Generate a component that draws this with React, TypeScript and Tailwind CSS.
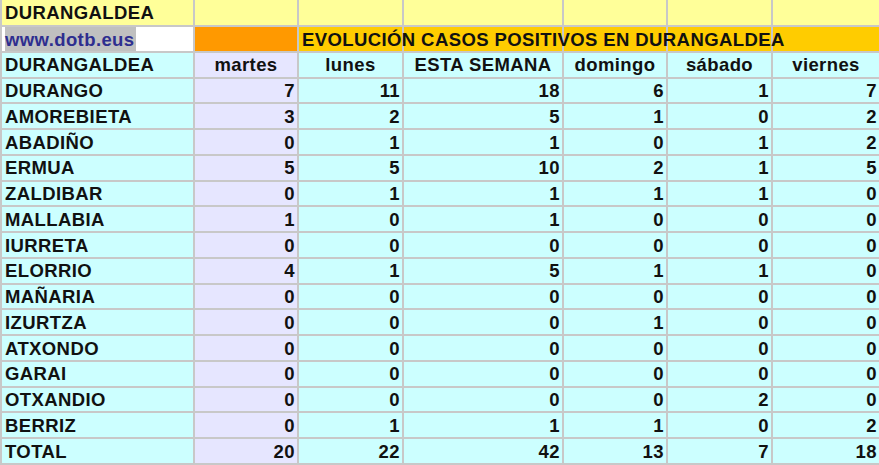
import React from "react";

const days = ["martes", "lunes", "ESTA SEMANA", "domingo", "sábado", "viernes"];

const rows: [string, number[]][] = [
  ["DURANGO", [7, 11, 18, 6, 1, 7]],
  ["AMOREBIETA", [3, 2, 5, 1, 0, 2]],
  ["ABADIÑO", [0, 1, 1, 0, 1, 2]],
  ["ERMUA", [5, 5, 10, 2, 1, 5]],
  ["ZALDIBAR", [0, 1, 1, 1, 1, 0]],
  ["MALLABIA", [1, 0, 1, 0, 0, 0]],
  ["IURRETA", [0, 0, 0, 0, 0, 0]],
  ["ELORRIO", [4, 1, 5, 1, 1, 0]],
  ["MAÑARIA", [0, 0, 0, 0, 0, 0]],
  ["IZURTZA", [0, 0, 0, 1, 0, 0]],
  ["ATXONDO", [0, 0, 0, 0, 0, 0]],
  ["GARAI", [0, 0, 0, 0, 0, 0]],
  ["OTXANDIO", [0, 0, 0, 0, 2, 0]],
  ["BERRIZ", [0, 1, 1, 1, 0, 2]],
  ["TOTAL", [20, 22, 42, 13, 7, 18]],
];

export default function App() {
  return (
    <div
      className="h-[465px] w-[879px] overflow-hidden bg-[#c8c8c8] pl-[2px] text-[18.5px] font-bold tracking-[0.4px] text-[#111]"
      style={{ fontFamily: '"Liberation Sans", Arial, sans-serif' }}
    >
      <div className="grid grid-cols-[191px_102px_103px_158px_102px_103px_106px] grid-rows-[25px_repeat(17,23.76px)] gap-[2px] leading-none">
        {/* fila 1 */}
        <div className="flex items-center bg-[#ffff99] pl-[3px] pt-[2px]">DURANGALDEA</div>
        {[0, 1, 2, 3, 4, 5].map((i) => (
          <div key={i} className="bg-[#ffff99]" />
        ))}

        {/* fila 2 */}
        <div className="flex bg-white pl-[3px]">
          <span className="flex items-center bg-[#c0c0c0] pr-px pt-[2px] text-[#2e2e8f]">www.dotb.eus</span>
        </div>
        <div className="bg-[#ff9900]" />
        <div className="relative z-10 flex items-center whitespace-nowrap bg-[#ffcc00] pl-[3px] pt-[2px]">
          EVOLUCIÓN CASOS POSITIVOS EN DURANGALDEA
        </div>
        {[0, 1, 2, 3].map((i) => (
          <div key={i} className="bg-[#ffcc00]" />
        ))}

        {/* cabecera */}
        <div className="flex items-center bg-[#ccffff] pl-[3px] pt-[2px]">DURANGALDEA</div>
        {days.map((d, i) => (
          <div
            key={d}
            className={`flex items-center justify-center pt-[2px] ${i === 0 ? "bg-[#e6e6ff]" : "bg-[#ccffff]"}`}
          >
            {d}
          </div>
        ))}

        {rows.map(([name, vals]) => (
          <React.Fragment key={name}>
            <div className="flex items-center bg-[#ccffff] pl-[3px] pt-[2px]">{name}</div>
            {vals.map((v, i) => (
              <div
                key={i}
                className={`flex items-center justify-end pr-[2px] pt-[2px] ${i === 0 ? "bg-[#e6e6ff]" : "bg-[#ccffff]"}`}
              >
                {v}
              </div>
            ))}
          </React.Fragment>
        ))}
      </div>
    </div>
  );
}
